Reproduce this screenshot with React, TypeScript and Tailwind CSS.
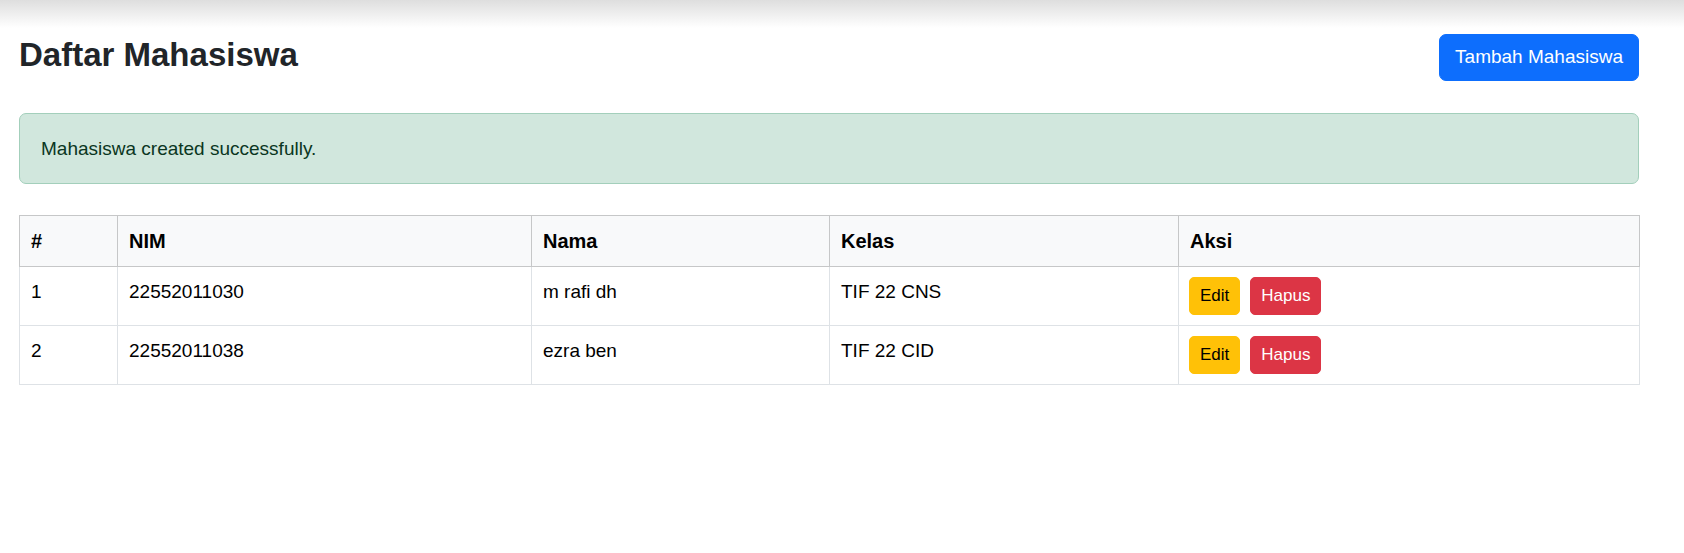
const students = [
  { id: 1, nim: "22552011030", nama: "m rafi dh", kelas: "TIF 22 CNS" },
  { id: 2, nim: "22552011038", nama: "ezra ben", kelas: "TIF 22 CID" },
];

const App = () => {
  return (
    <div className="relative min-h-[553px] bg-white font-['Liberation_Sans',Arial,sans-serif] text-[#212529]">
      {/* top inset shadow */}
      <div className="pointer-events-none absolute inset-x-0 top-0 h-[28px] bg-linear-to-b from-[#dedede] to-transparent" />

      <div className="ml-[19px] w-[1620px] pt-[34px]">
        <div className="flex items-start justify-between">
          <h2 className="mt-[1px] text-[33px] leading-[40px] font-bold">Daftar Mahasiswa</h2>
          <button className="h-[47px] rounded-[7px] border border-[#0d6efd] bg-[#0d6efd] px-[15px] text-[19px] text-white">
            Tambah Mahasiswa
          </button>
        </div>

        <div className="mt-[32px] rounded-[7px] border border-[#a3cfbb] bg-[#d1e7dd] px-[21px] py-[20px] text-[19px] leading-[29px] text-[#0a3622]">
          Mahasiswa created successfully.
        </div>

        <table className="mt-[31px] w-[1620px] table-fixed border-collapse text-[19px] leading-[30px]">
          <colgroup>
            <col className="w-[98px]" />
            <col className="w-[414px]" />
            <col className="w-[298px]" />
            <col className="w-[349px]" />
            <col className="w-[461px]" />
          </colgroup>
          <thead>
            <tr className="bg-[#f8f9fa] text-left text-[20px] font-bold text-black">
              {["#", "NIM", "Nama", "Kelas", "Aksi"].map((h) => (
                <th key={h} className="border border-[#c6c7c8] px-[11px] py-[10px] align-top">
                  {h}
                </th>
              ))}
            </tr>
          </thead>
          <tbody>
            {students.map((s) => (
              <tr key={s.id} className="text-black">
                <td className="border border-[#dee2e6] px-[11px] py-[10px] align-top">{s.id}</td>
                <td className="border border-[#dee2e6] px-[11px] py-[10px] align-top">{s.nim}</td>
                <td className="border border-[#dee2e6] px-[11px] py-[10px] align-top">{s.nama}</td>
                <td className="border border-[#dee2e6] px-[11px] py-[10px] align-top">{s.kelas}</td>
                <td className="border border-[#dee2e6] px-[10px] py-[10px] align-top">
                  <div className="flex gap-[10px]">
                    <button className="h-[38px] rounded-[5px] border border-[#ffc107] bg-[#ffc107] px-[10px] text-[17px] text-black">
                      Edit
                    </button>
                    <button className="h-[38px] rounded-[5px] border border-[#dc3545] bg-[#dc3545] px-[10px] text-[17px] text-white">
                      Hapus
                    </button>
                  </div>
                </td>
              </tr>
            ))}
          </tbody>
        </table>
      </div>
    </div>
  );
};

export default App;
